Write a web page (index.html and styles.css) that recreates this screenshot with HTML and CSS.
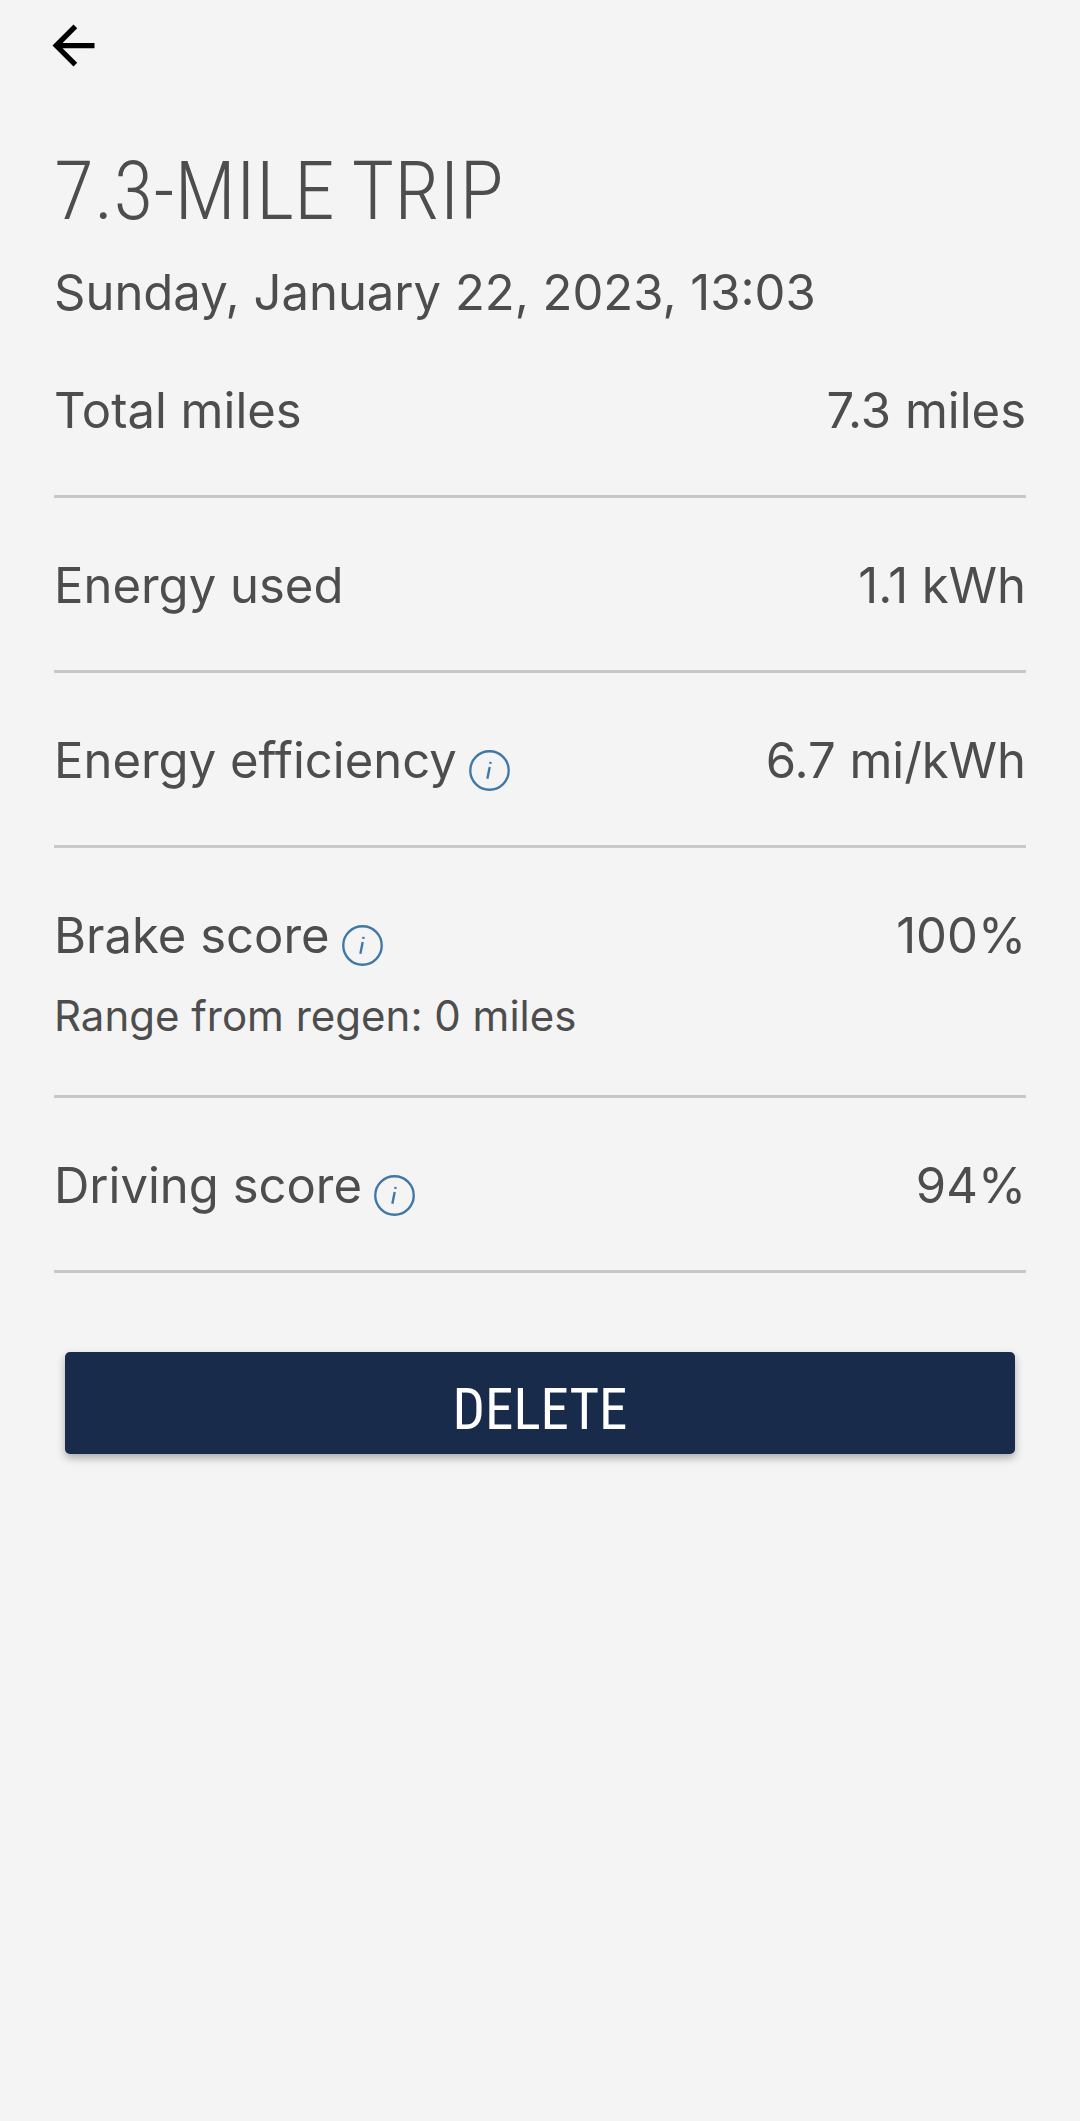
FILE: index.html
```html
<!DOCTYPE html>
<html lang="en">

<head>
    <meta charset="UTF-8">
    <meta name="viewport" content="width=device-width, initial-scale=1.0">
    <title>7.3-Mile Trip</title>
    <link rel="stylesheet" href="styles.css">
</head>

<body>
    <header class="top-bar">
        <button class="back-button" aria-label="Back">
            <svg viewBox="0 0 24 24" aria-hidden="true">
                <path d="M20 11H7.83l5.59-5.59L12 4l-8 8 8 8 1.41-1.41L7.83 13H20v-2z" />
            </svg>
        </button>
    </header>

    <main class="trip">
        <h1>7.3-MILE TRIP</h1>
        <p class="trip-date">Sunday, January 22, 2023, 13:03</p>

        <dl class="stats">
            <div class="stat">
                <dt>Total miles</dt>
                <dd>7.3 miles</dd>
            </div>
            <div class="stat">
                <dt>Energy used</dt>
                <dd>1.1 kWh</dd>
            </div>
            <div class="stat">
                <dt>
                    Energy efficiency
                    <button class="info-button" aria-label="About energy efficiency">
                        <svg viewBox="0 0 42 42" aria-hidden="true">
                            <circle cx="21" cy="21" r="19.7" />
                            <path d="M21.2 17.5L18.8 29.5M22.1 12.2L21.8 14.2" />
                        </svg>
                    </button>
                </dt>
                <dd>6.7 mi/kWh</dd>
            </div>
            <div class="stat">
                <dt>
                    Brake score
                    <button class="info-button" aria-label="About brake score">
                        <svg viewBox="0 0 42 42" aria-hidden="true">
                            <circle cx="21" cy="21" r="19.7" />
                            <path d="M21.2 17.5L18.8 29.5M22.1 12.2L21.8 14.2" />
                        </svg>
                    </button>
                </dt>
                <dd>100%</dd>
                <dd class="stat-note">Range from regen: 0 miles</dd>
            </div>
            <div class="stat">
                <dt>
                    Driving score
                    <button class="info-button" aria-label="About driving score">
                        <svg viewBox="0 0 42 42" aria-hidden="true">
                            <circle cx="21" cy="21" r="19.7" />
                            <path d="M21.2 17.5L18.8 29.5M22.1 12.2L21.8 14.2" />
                        </svg>
                    </button>
                </dt>
                <dd>94%</dd>
            </div>
        </dl>

        <button class="delete-button">DELETE</button>
    </main>
</body>

</html>
```

FILE: styles.css
```css
* {
    box-sizing: border-box;
}

body {
    margin: 0;
    font-family: Inter, Roboto, sans-serif;
    font-size: 49px;
    line-height: 60px;
    color: #4d4d4d;
    background-color: #f4f4f4;
}

button {
    padding: 0;
    border: none;
    background: none;
    cursor: pointer;
}

.top-bar {
    padding: 14px 42px;
}

.back-button {
    display: block;
    width: 63px;
    height: 63px;
}

.back-button svg {
    display: block;
    fill: #000;
}

.trip {
    padding: 50px 54px;
}

h1 {
    margin: 0;
    font-family: "Roboto Condensed", Roboto, sans-serif;
    font-size: 82px;
    font-weight: 350;
    line-height: 100px;
}

.trip-date {
    margin: 22px 0 0;
}

.stats {
    margin: 0;
}

.stat {
    display: flex;
    flex-wrap: wrap;
    justify-content: space-between;
    padding: 58px 0 54px;
    border-bottom: 3px solid #c8c8c8;
}

.stat dt {
    display: flex;
    align-items: flex-end;
    gap: 12px;
}

.stat dd {
    margin: 0;
}

.stat .stat-note {
    width: 100%;
    margin-top: 25px;
    font-size: 42px;
    line-height: 50px;
}

.info-button {
    width: 41px;
    height: 41px;
}

.info-button svg {
    display: block;
    fill: none;
    stroke: #3f78a8;
    stroke-width: 2.4;
}

.delete-button {
    display: block;
    width: calc(100% - 22px);
    height: 102px;
    margin: 79px auto 0;
    padding-top: 14px;
    font-family: "Roboto Condensed", Roboto, sans-serif;
    font-size: 57px;
    line-height: 60px;
    color: #fff;
    background-color: #182b4b;
    border-radius: 5px;
    box-shadow: 0 4px 8px rgba(0, 0, 0, 0.3);
}
```
